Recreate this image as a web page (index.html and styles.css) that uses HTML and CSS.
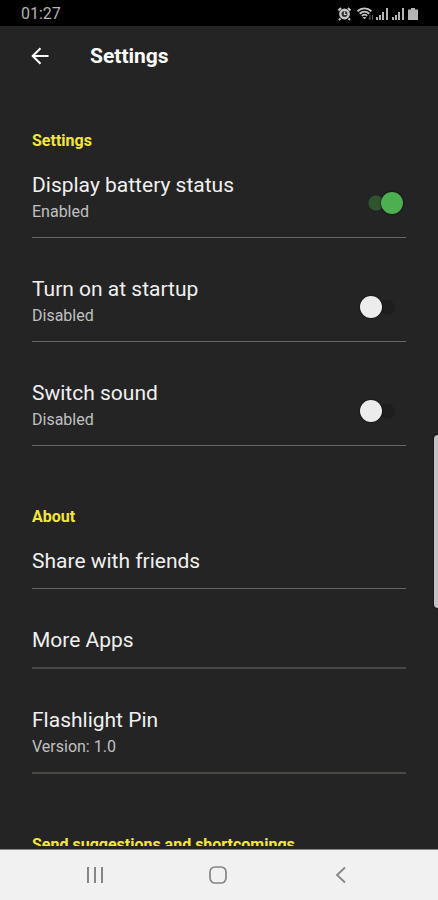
FILE: index.html
```html
<!DOCTYPE html>
<html lang="en">
<head>
<meta charset="utf-8">
<meta name="viewport" content="width=device-width, initial-scale=1">
<title>Settings</title>
<link rel="stylesheet" href="styles.css">
</head>
<body>
<div class="status-bar">
  <time>01:27</time>
  <svg class="status-icons" width="84" height="16" viewBox="0 0 84 16" aria-hidden="true">
    <g fill="none" stroke="#c8c8c8">
      <circle cx="7.500" cy="8" r="4.200" fill="#333" stroke-width="2.400"/>
      <path d="M7.500 5.500V8.500H9.500" stroke-width="1.200"/>
      <path d="M1.500 4.500L4 2M11 2l2.500 2.500M3.500 12.500L2 14M11.500 12.500L13 14" stroke-width="2"/>
      <path d="M20.500 5.200C24.500 1.400 30.500 1.400 34.500 5.200M22.700 7.700c2.800-2.600 6.800-2.600 9.600 0" stroke-width="1.900"/>
      <path d="M24.800 9.800c1.600-1.400 3.800-1.400 5.400 0" stroke-width="1.600"/>
      <path d="M33 9v4.500M31.800 12.200L33 13.500M35.500 13.500V9" stroke="#666"/>
    </g>
    <g fill="#b4b4b4">
      <path d="M25.500 11h4l-2 2.500z"/>
      <path d="M39 11h2v3h-2zM42 9h2v5h-2zM45 6h2v8h-2zM49 2h2v12h-2z"/>
      <path d="M55 11h2v3h-2zM58 9h2v5h-2zM61 6h2v8h-2zM65 2h2v12h-2z"/>
      <path d="M74 2h4v1.500h3V14H71V3.500h3z"/>
    </g>
  </svg>
</div>
<header class="app-bar">
  <button class="back" type="button" aria-label="Back">
    <svg width="18" height="18" viewBox="0 0 18 18" fill="none" stroke="#fff" stroke-width="2"><path d="M17.500 9H2M9.500 1.200L1.700 9l7.800 7.800"/></svg>
  </button>
  <h1>Settings</h1>
</header>
<main class="content">
  <section class="group">
    <h2>Settings</h2>
    <label class="row">
      <span class="text"><span class="name">Display battery status</span><span class="detail">Enabled</span></span>
      <input class="switch" type="checkbox" role="switch" checked>
    </label>
    <label class="row">
      <span class="text"><span class="name">Turn on at startup</span><span class="detail">Disabled</span></span>
      <input class="switch" type="checkbox" role="switch">
    </label>
    <label class="row">
      <span class="text"><span class="name">Switch sound</span><span class="detail">Disabled</span></span>
      <input class="switch" type="checkbox" role="switch">
    </label>
  </section>
  <section class="group">
    <h2>About</h2>
    <button class="row single" type="button"><span class="text"><span class="name">Share with friends</span></span></button>
    <button class="row single strong" type="button"><span class="text"><span class="name">More Apps</span></span></button>
    <div class="row strong"><span class="text"><span class="name">Flashlight Pin</span><span class="detail">Version: 1.0</span></span></div>
  </section>
  <section class="group">
    <h2>Send suggestions and shortcomings</h2>
  </section>
</main>
<nav class="nav-bar">
  <button type="button" aria-label="Recent apps"><svg width="18" height="18" viewBox="0 0 18 18" fill="none" stroke="#858585" stroke-width="2"><path d="M2 1v16M9 1v16M16 1v16"/></svg></button>
  <button type="button" aria-label="Home"><svg width="18" height="18" viewBox="0 0 18 18" fill="none" stroke="#858585" stroke-width="1.700"><rect x="1" y="1" width="16" height="16" rx="5"/></svg></button>
  <button type="button" aria-label="Back"><svg width="18" height="18" viewBox="0 0 18 18" fill="none" stroke="#858585" stroke-width="1.800"><path d="M13 1.500L5 9l8 7.500"/></svg></button>
</nav>
<div class="edge-handle"></div>
</body>
</html>
```
FILE: styles.css
```css
* {
  box-sizing: border-box;
}

body {
  margin: 0;
  height: 100vh;
  display: flex;
  flex-direction: column;
  overflow: hidden;
  background: #242424;
  color: #f0f0f0;
  font-family: Roboto, "Liberation Sans", sans-serif;
}

button {
  padding: 0;
  border: 0;
  background: none;
  color: inherit;
  font: inherit;
  text-align: left;
}

svg {
  display: block;
}

.status-bar {
  flex: none;
  display: flex;
  align-items: center;
  justify-content: space-between;
  height: 26px;
  padding: 2px 17px 0 21px;
  background: #000;
  color: #b4b4b4;
  font-size: 16px;
  line-height: 24px;
}

.app-bar {
  flex: none;
  display: flex;
  align-items: center;
  gap: 41px;
  height: 60px;
  padding: 0 31px;
}

h1 {
  margin: 0;
  color: #fff;
  font-size: 21px;
  font-weight: 700;
  line-height: 28px;
}

.content {
  flex: 1;
  min-height: 0;
  margin-bottom: 3px;
  padding: 45px 32px 0;
  overflow: hidden;
}

.group {
  margin-bottom: 61px;
}

h2 {
  margin: 0 0 20px;
  color: #f4e63c;
  font-size: 16px;
  font-weight: 700;
  line-height: 20px;
}

.row {
  display: flex;
  align-items: center;
  justify-content: space-between;
  width: 100%;
  margin-bottom: 37px;
  padding: 0 3px 2px 0;
  border-bottom: 1px solid #666;
}

.row.single {
  padding-bottom: 3px;
}

.row.strong {
  border-bottom: 2px solid #4a4a45;
}

.text {
  display: flex;
  flex-direction: column;
  padding-bottom: 10px;
}

.name {
  font-size: 21px;
  line-height: 28px;
}

.detail {
  color: #c0c0c0;
  font-size: 16px;
  line-height: 26px;
}

.switch {
  appearance: none;
  display: flex;
  align-items: center;
  width: 43px;
  height: 22px;
  margin: 0;
  background: radial-gradient(circle at 27px 11px, #1e1e1e 7px, transparent 8px);
}

.switch::before {
  content: "";
  width: 22px;
  height: 22px;
  border-radius: 50%;
  background: #ececec;
  box-shadow: 0 0 2px #000;
}

.switch:checked {
  justify-content: flex-end;
  background: radial-gradient(circle at 16px 11px, #2e5430 7px, transparent 8px);
}

.switch:checked::before {
  background: #4caf50;
}

.nav-bar {
  flex: none;
  display: flex;
  align-items: center;
  justify-content: space-around;
  height: 51px;
  padding: 0 36px 0 34px;
  border-top: 1px solid #8a8686;
  background: #f1f1f1;
}

.edge-handle {
  position: absolute;
  top: 435px;
  right: 0;
  width: 4px;
  height: 173px;
  border-radius: 4px 0 0 4px;
  background: #c4c2c4;
  box-shadow: 0 0 2px #000;
}
```
